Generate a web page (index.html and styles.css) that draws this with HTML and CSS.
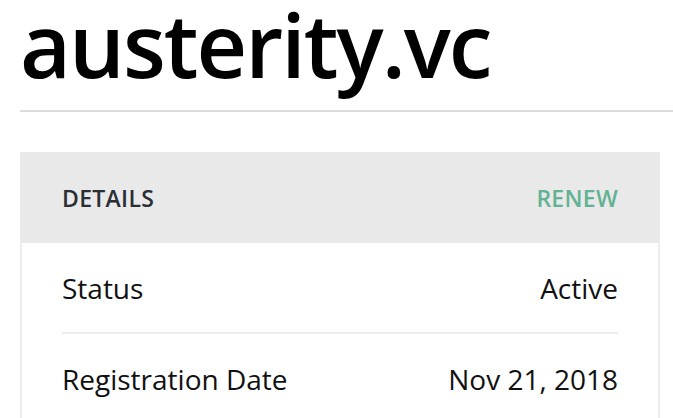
FILE: index.html
```html
<!DOCTYPE html>
<html>
<head>
<meta charset="utf-8">
<link rel="stylesheet" href="styles.css">
</head>
<body>
<div class="page">
  <h1 class="domain">austerity.vc</h1>
  <div class="rule"></div>
  <section class="card">
    <header class="card-head">
      <span class="card-title">DETAILS</span>
      <a class="card-action">RENEW</a>
    </header>
    <div class="card-body">
      <div class="row">
        <span class="label">Status</span>
        <span class="value">Active</span>
      </div>
      <div class="row">
        <span class="label">Registration Date</span>
        <span class="value">Nov 21, 2018</span>
      </div>
    </div>
  </section>
</div>
</body>
</html>
```
FILE: styles.css
```css
html, body {
  margin: 0;
  padding: 0;
  background: #fff;
  overflow: hidden;
}
body {
  font-family: "Open Sans", "Noto Sans", sans-serif;
  color: #111;
}
.page {
  padding: 0 0 0 20px;
}
.domain {
  margin: 0 0 22px;
  font-size: 88px;
  font-weight: 600;
  line-height: 88px;
  letter-spacing: -2px;
  color: #000;
}
.rule {
  height: 2px;
  background: #dcdcdc;
  margin-bottom: 40px;
}
.card {
  width: 640px;
  box-sizing: border-box;
}
.card-head {
  display: flex;
  justify-content: space-between;
  align-items: center;
  height: 91px;
  padding: 0 42px;
  background: #e9e9e9;
}
.card-title {
  font-size: 23px;
  font-weight: 600;
  color: #2a2e35;
  letter-spacing: 0.3px;
}
.card-action {
  font-size: 23px;
  font-weight: 600;
  color: #62b393;
  letter-spacing: 0.3px;
}
.card-body {
  border-left: 2px solid #ececec;
  border-right: 2px solid #ececec;
  padding: 0 40px;
}
.row {
  display: flex;
  justify-content: space-between;
  align-items: center;
  height: 89px;
  font-size: 28px;
  color: #111;
}
.row + .row {
  border-top: 2px solid #ececec;
}
```
